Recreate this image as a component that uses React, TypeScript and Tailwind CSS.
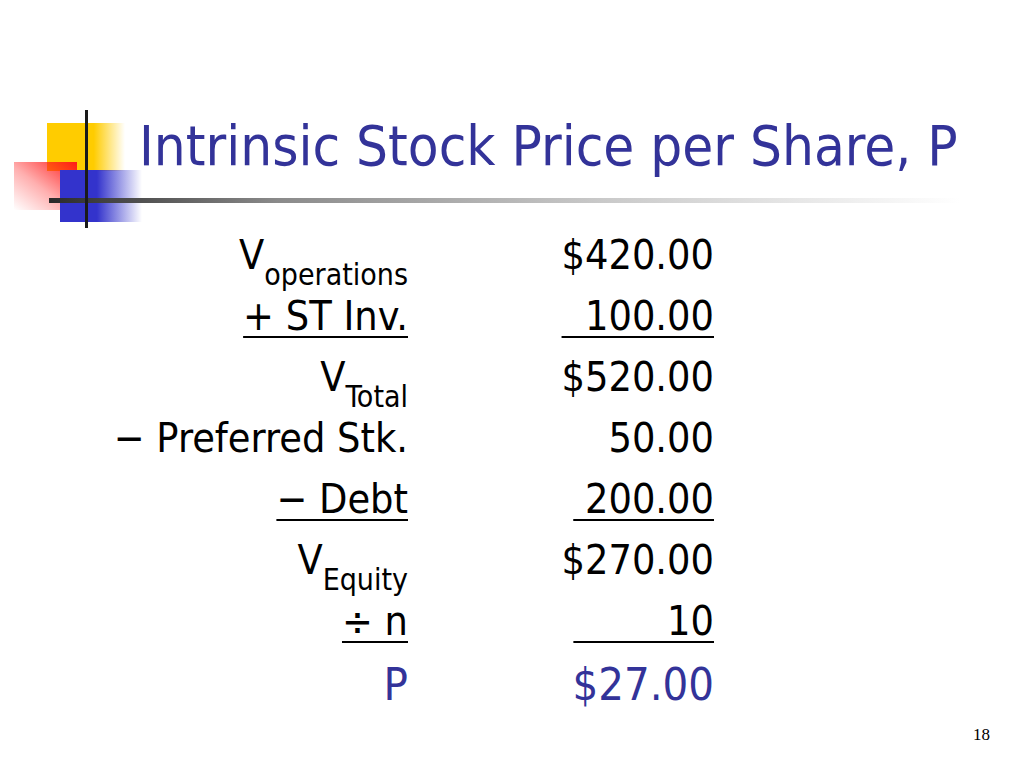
import React from 'react';

const rows = [
  { label: 'V', sub: 'operations', value: '$420.00' },
  { label: '+ ST Inv.', value: '\u00a0\u00a0100.00', under: true },
  { label: 'V', sub: 'Total', value: '$520.00' },
  { label: '\u2212 Preferred Stk.', value: '50.00' },
  { label: '\u2212 Debt', value: '\u00a0200.00', under: true },
  { label: 'V', sub: 'Equity', value: '$270.00' },
  { label: '\u00f7 n', value: '\u00a0\u00a0\u00a0\u00a0\u00a0\u00a0\u00a0\u00a010', under: true },
];

function Logo() {
  return (
    <svg className="absolute left-0 top-0" width="150" height="240" viewBox="0 0 150 240">
      <defs>
        <linearGradient id="yel" x1="0" y1="0" x2="1" y2="0">
          <stop offset="0" stopColor="#ffcc00" />
          <stop offset="0.6" stopColor="#ffcc00" />
          <stop offset="1" stopColor="#ffcc00" stopOpacity="0" />
        </linearGradient>
        <linearGradient id="red" x1="1" y1="0" x2="0" y2="1">
          <stop offset="0" stopColor="#ff1a1a" />
          <stop offset="0.55" stopColor="#ff1a1a" stopOpacity="0.35" />
          <stop offset="1" stopColor="#ff1a1a" stopOpacity="0" />
        </linearGradient>
        <linearGradient id="blu" x1="0" y1="0" x2="1" y2="0">
          <stop offset="0" stopColor="#3333cc" />
          <stop offset="0.45" stopColor="#3333cc" />
          <stop offset="1" stopColor="#3333cc" stopOpacity="0" />
        </linearGradient>
      </defs>
      <rect x="47" y="123" width="78" height="48" fill="url(#yel)" />
      <rect x="14" y="162" width="63" height="48" fill="url(#red)" />
      <rect x="60" y="170" width="82" height="52" fill="url(#blu)" />
    </svg>
  );
}

export default function App() {
  return (
    <div
      className="relative w-[1024px] h-[768px] bg-white overflow-hidden text-black"
      style={{ fontFamily: '"DejaVu Sans Condensed", Tahoma, "DejaVu Sans", sans-serif' }}
    >
      <Logo />
      <div className="relative pt-[114px] pl-[139px] h-[198px]">
        <h1 className="text-[56px] leading-[64px] text-[#333399] whitespace-nowrap">
          Intrinsic Stock Price per Share, P
        </h1>
      </div>
      <div className="relative ml-[49px] w-[911px] h-[5px] bg-[linear-gradient(to_right,#2a2a2a_0%,#8a8a8a_25%,#c8c8c8_60%,#ffffff_100%)]" />
      <div className="absolute left-[85px] top-[110px] w-[3px] h-[118px] bg-[#1a1a1a]" />

      <div className="mt-[28px] flex flex-col">
        {rows.map((r, i) => (
          <div key={i} className="flex h-[61px] items-start text-[41px] leading-[48px]">
            <div className="w-[408px] text-right whitespace-nowrap">
              {r.sub ? (
                <span>
                  V<sub className="text-[30px] align-[-8px]">{r.sub}</sub>
                </span>
              ) : (
                <span className={r.under ? 'underline decoration-2 underline-offset-[6px]' : ''}>{r.label}</span>
              )}
            </div>
            <div className="w-[306px] text-right whitespace-pre">
              <span className={r.under ? 'underline decoration-2 underline-offset-[6px]' : ''}>{r.value}</span>
            </div>
          </div>
        ))}
        <div className="flex text-[45px] leading-[54px] text-[#333399]">
          <div className="w-[408px] text-right">P</div>
          <div className="w-[306px] text-right">$27.00</div>
        </div>
      </div>

      <div
        className="absolute right-[34px] bottom-[24px] text-[17px] leading-[18px]"
        style={{ fontFamily: '"Liberation Serif", serif' }}
      >
        18
      </div>
    </div>
  );
}
